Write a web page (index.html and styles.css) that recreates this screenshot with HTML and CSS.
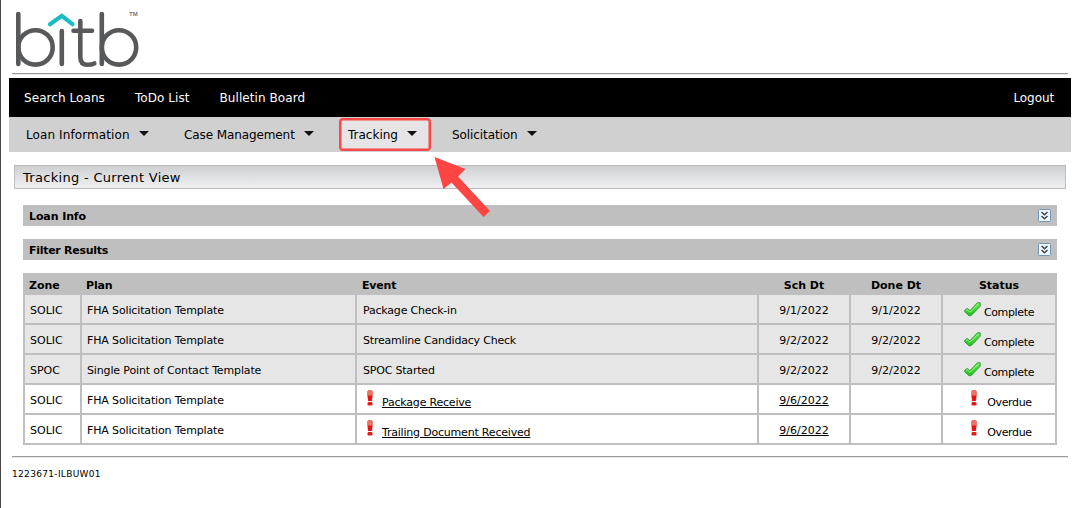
FILE: index.html
```html
<!DOCTYPE html>
<html lang="en">
<head>
<meta charset="utf-8">
<title>Tracking - Current View</title>
<link rel="stylesheet" href="styles.css">
</head>
<body>
<svg class="defs" width="0" height="0" aria-hidden="true">
  <defs>
    <linearGradient id="green" x1="0" y1="0" x2="0" y2="1"><stop offset="0" stop-color="#6fe85a"/><stop offset="1" stop-color="#1fc01f"/></linearGradient>
    <symbol id="check" viewBox="0 0 17 15"><path d="M.7 8.200 3.300 6.400 6 8.700 13.400 .8 16.200 .8V4.200L7 13.700H5L.7 9.800Z" fill="url(#green)" stroke="#249a24" stroke-width=".9"/><path d="M2 8.600 3.400 7.800 6 10.300 14.400 1.900" fill="none" stroke="#a5f58c" stroke-width=".9"/></symbol>
    <symbol id="alert" viewBox="0 0 6 16"><path d="M.5 1.500Q.5.3 3 .3T5.500 1.500V6.500L4.900 11H1.100L.5 6.500Z" fill="#e81414"/><path d="M.5 1.500Q.5.3 3 .3T5.500 1.500V5.500H.5Z" fill="#ee7462"/><rect x=".5" y="12" width="5" height="3.600" rx="1.400" fill="#e31b12"/></symbol>
    <symbol id="expand" viewBox="0 0 13 13"><rect x=".5" y=".5" width="12" height="12" rx="1" fill="#f0f8ff" stroke="#7295b5"/><path d="M3.500 3 6.500 5.700 9.500 3M3.500 7 6.500 9.700 9.500 7" fill="none" stroke="#384452" stroke-width="1.500"/></symbol>
  </defs>
</svg>
<div class="page">
  <header class="brand">
    <svg class="logo" width="130" height="60" viewBox="12 8 130 60" role="img" aria-label="bitb">
      <g fill="none" stroke="#58595b" stroke-width="4.600" stroke-linecap="round">
        <path d="M18.300 14V64M61.800 31V64M80.300 21V57Q80.300 64.800 87.500 64.800 91.500 64.800 94.300 63.500M73.500 30.800H92M101.800 14V64"/>
        <circle cx="35.500" cy="47.400" r="17.200"/><circle cx="119" cy="47.400" r="17.200"/>
      </g>
      <path d="M50 24.200 61.800 15.800 72.500 24.200" fill="none" stroke="#1abcc4" stroke-width="4.200" stroke-linecap="round"/>
      <text class="tm" x="129" y="15.500">TM</text>
    </svg>
  </header>
  <nav class="top"><a>Search Loans</a><a>ToDo List</a><a>Bulletin Board</a><a class="logout">Logout</a></nav>
  <nav class="sub">
    <a class="s1"><span>Loan Information</span><i></i></a>
    <a class="s2"><span>Case Management</span><i></i></a>
    <a class="s3"><span>Tracking</span><i></i></a>
    <a class="s4"><span>Solicitation</span><i></i></a>
  </nav>
  <h1><span>Tracking - Current View</span></h1>
  <main>
    <section class="panel"><b class="t1">Loan Info</b><svg width="13" height="13"><use href="#expand"/></svg></section>
    <section class="panel"><b class="t2">Filter Results</b><svg width="13" height="13"><use href="#expand"/></svg></section>
    <div class="grid">
      <div class="row head"><b>Zone</b><b>Plan</b><b>Event</b><b>Sch Dt</b><b>Done Dt</b><b>Status</b></div>
      <div class="row done"><span>SOLIC</span><span>FHA Solicitation Template</span><span>Package Check-in</span><span>9/1/2022</span><span>9/1/2022</span><span class="st"><svg width="17" height="15"><use href="#check"/></svg><em>Complete</em></span></div>
      <div class="row done"><span>SOLIC</span><span>FHA Solicitation Template</span><span>Streamline Candidacy Check</span><span>9/2/2022</span><span>9/2/2022</span><span class="st"><svg width="17" height="15"><use href="#check"/></svg><em>Complete</em></span></div>
      <div class="row done"><span>SPOC</span><span>Single Point of Contact Template</span><span>SPOC Started</span><span>9/2/2022</span><span>9/2/2022</span><span class="st"><svg width="17" height="15"><use href="#check"/></svg><em>Complete</em></span></div>
      <div class="row"><span>SOLIC</span><span>FHA Solicitation Template</span><span class="ev"><svg width="6" height="16"><use href="#alert"/></svg><u>Package Receive</u></span><span><u>9/6/2022</u></span><span></span><span class="st late"><svg width="6" height="16"><use href="#alert"/></svg><em>Overdue</em></span></div>
      <div class="row"><span>SOLIC</span><span>FHA Solicitation Template</span><span class="ev"><svg width="6" height="16"><use href="#alert"/></svg><u>Trailing Document Received</u></span><span><u>9/6/2022</u></span><span></span><span class="st late"><svg width="6" height="16"><use href="#alert"/></svg><em>Overdue</em></span></div>
    </div>
  </main>
  <footer>1223671-ILBUW01</footer>
</div>
<svg class="arrow" width="60" height="64" viewBox="432 155 60 64"><path d="M434.500 157 465.500 169 458 176.500 490 211 483.500 217 451.500 182.500 443.500 189Z" fill="#ff4444"/></svg>
</body>
</html>
```

FILE: styles.css
```css
* { box-sizing: border-box; }
body { margin: 0; height: 508px; overflow: hidden; background: #fff; color: #000; font-family: Verdana, "DejaVu Sans", sans-serif; font-size: 11px; }
.defs { position: absolute; }
.page { height: 508px; border-left: 1px solid #454545; padding: 0 6px 0 8px; }
.brand { height: 75px; margin: 0 3px; padding-top: 8px; border-bottom: 1px solid #e4e4e4; box-shadow: inset 0 -1px #999; }
.logo { display: block; }
.tm { font: bold 6px "Liberation Sans", sans-serif; fill: #77787a; }
.top { display: flex; gap: 30px; align-items: center; height: 39px; margin-top: 3px; padding: 0 17px 0 15px; background: #000; color: #fff; font-size: 12px; letter-spacing: .07px; }
.logout { margin-left: auto; letter-spacing: -.1px; }
.sub { display: grid; grid-template-columns: 157px 173px 92px 1fr; height: 35px; background: #d0d0d0; font-size: 12px; }
.sub a { display: flex; align-items: center; gap: 9px; white-space: nowrap; }
.sub i { border: 5px solid transparent; border-top-color: #111; border-bottom: 0; margin-top: -2px; }
.s1 { padding-left: 17px; letter-spacing: .1px; }
.sub .s2 { padding-left: 18px; letter-spacing: -.1px; }
.sub .s3 { margin: 1px 0 0; height: 33px; padding-left: 7px; background: #e6e4e4; border: 2px solid #fb4848; box-shadow: inset 0 0 0 .5px #fb4848; border-radius: 4px; }
.s4 { padding-left: 21px; letter-spacing: -.08px; }
h1 { display: flex; align-items: center; height: 24px; margin: 13px 5px 0; padding-left: 8px; border: 1px solid #bbb; background: linear-gradient(#cfd0d2, #f0f0f2); font-size: 13px; font-weight: 400; letter-spacing: .3px; }
main { margin: 16px 14px 0; }
.panel { display: flex; align-items: center; justify-content: space-between; height: 21px; margin-bottom: 13px; padding: 0 6px; background: #bfbfbf; }
.panel b { padding-top: 2px; }
.t1 { letter-spacing: -.1px; }
.t2 { letter-spacing: -.28px; }
.grid { display: grid; gap: 2px; height: 172px; padding: 0 2px 2px; background: #bfbfbf; grid-template-rows: 20px repeat(5, 28px); }
.row { display: grid; grid-template-columns: 55px 273px 400px 90px 90px 112px; gap: 2px; }
.row > * { display: flex; align-items: center; padding: 2px 0 0 5px; background: #fff; white-space: nowrap; min-width: 0; }
.row > :nth-child(2) { letter-spacing: -.14px; }
.row > :nth-child(3) { letter-spacing: -.2px; padding-left: 6px; }
.row > :nth-child(n+4) { justify-content: center; padding: 2px 0 0; }
.row.head > * { background: none; padding: 4px 0 0 4px; }
.row.head > :nth-child(3) { padding-left: 5px; }
.row.head > :nth-child(n+4) { padding-left: 0; }
.done > * { background: #e6e6e6; }
.st { gap: 3px; letter-spacing: -.35px; }
.st em, .ev u { font-style: normal; padding-top: 4px; }
.row > .late:nth-child(6) { gap: 10px; padding-left: 5px; }
.ev { gap: 9px; }
.row > .ev:nth-child(3) { padding-left: 10px; }
.row svg { margin-top: -5px; }
.st:not(.late) svg { margin-top: -2px; }
.st:not(.late) em { padding-top: 4px; }
u { text-underline-offset: 1px; }
footer { height: 40px; margin: 11px 3px 0; padding-top: 12px; border-top: 1px solid #999; box-shadow: inset 0 1px #e8e8e8; font-size: 9px; letter-spacing: .32px; }
.arrow { position: absolute; left: 432px; top: 155px; }
```
